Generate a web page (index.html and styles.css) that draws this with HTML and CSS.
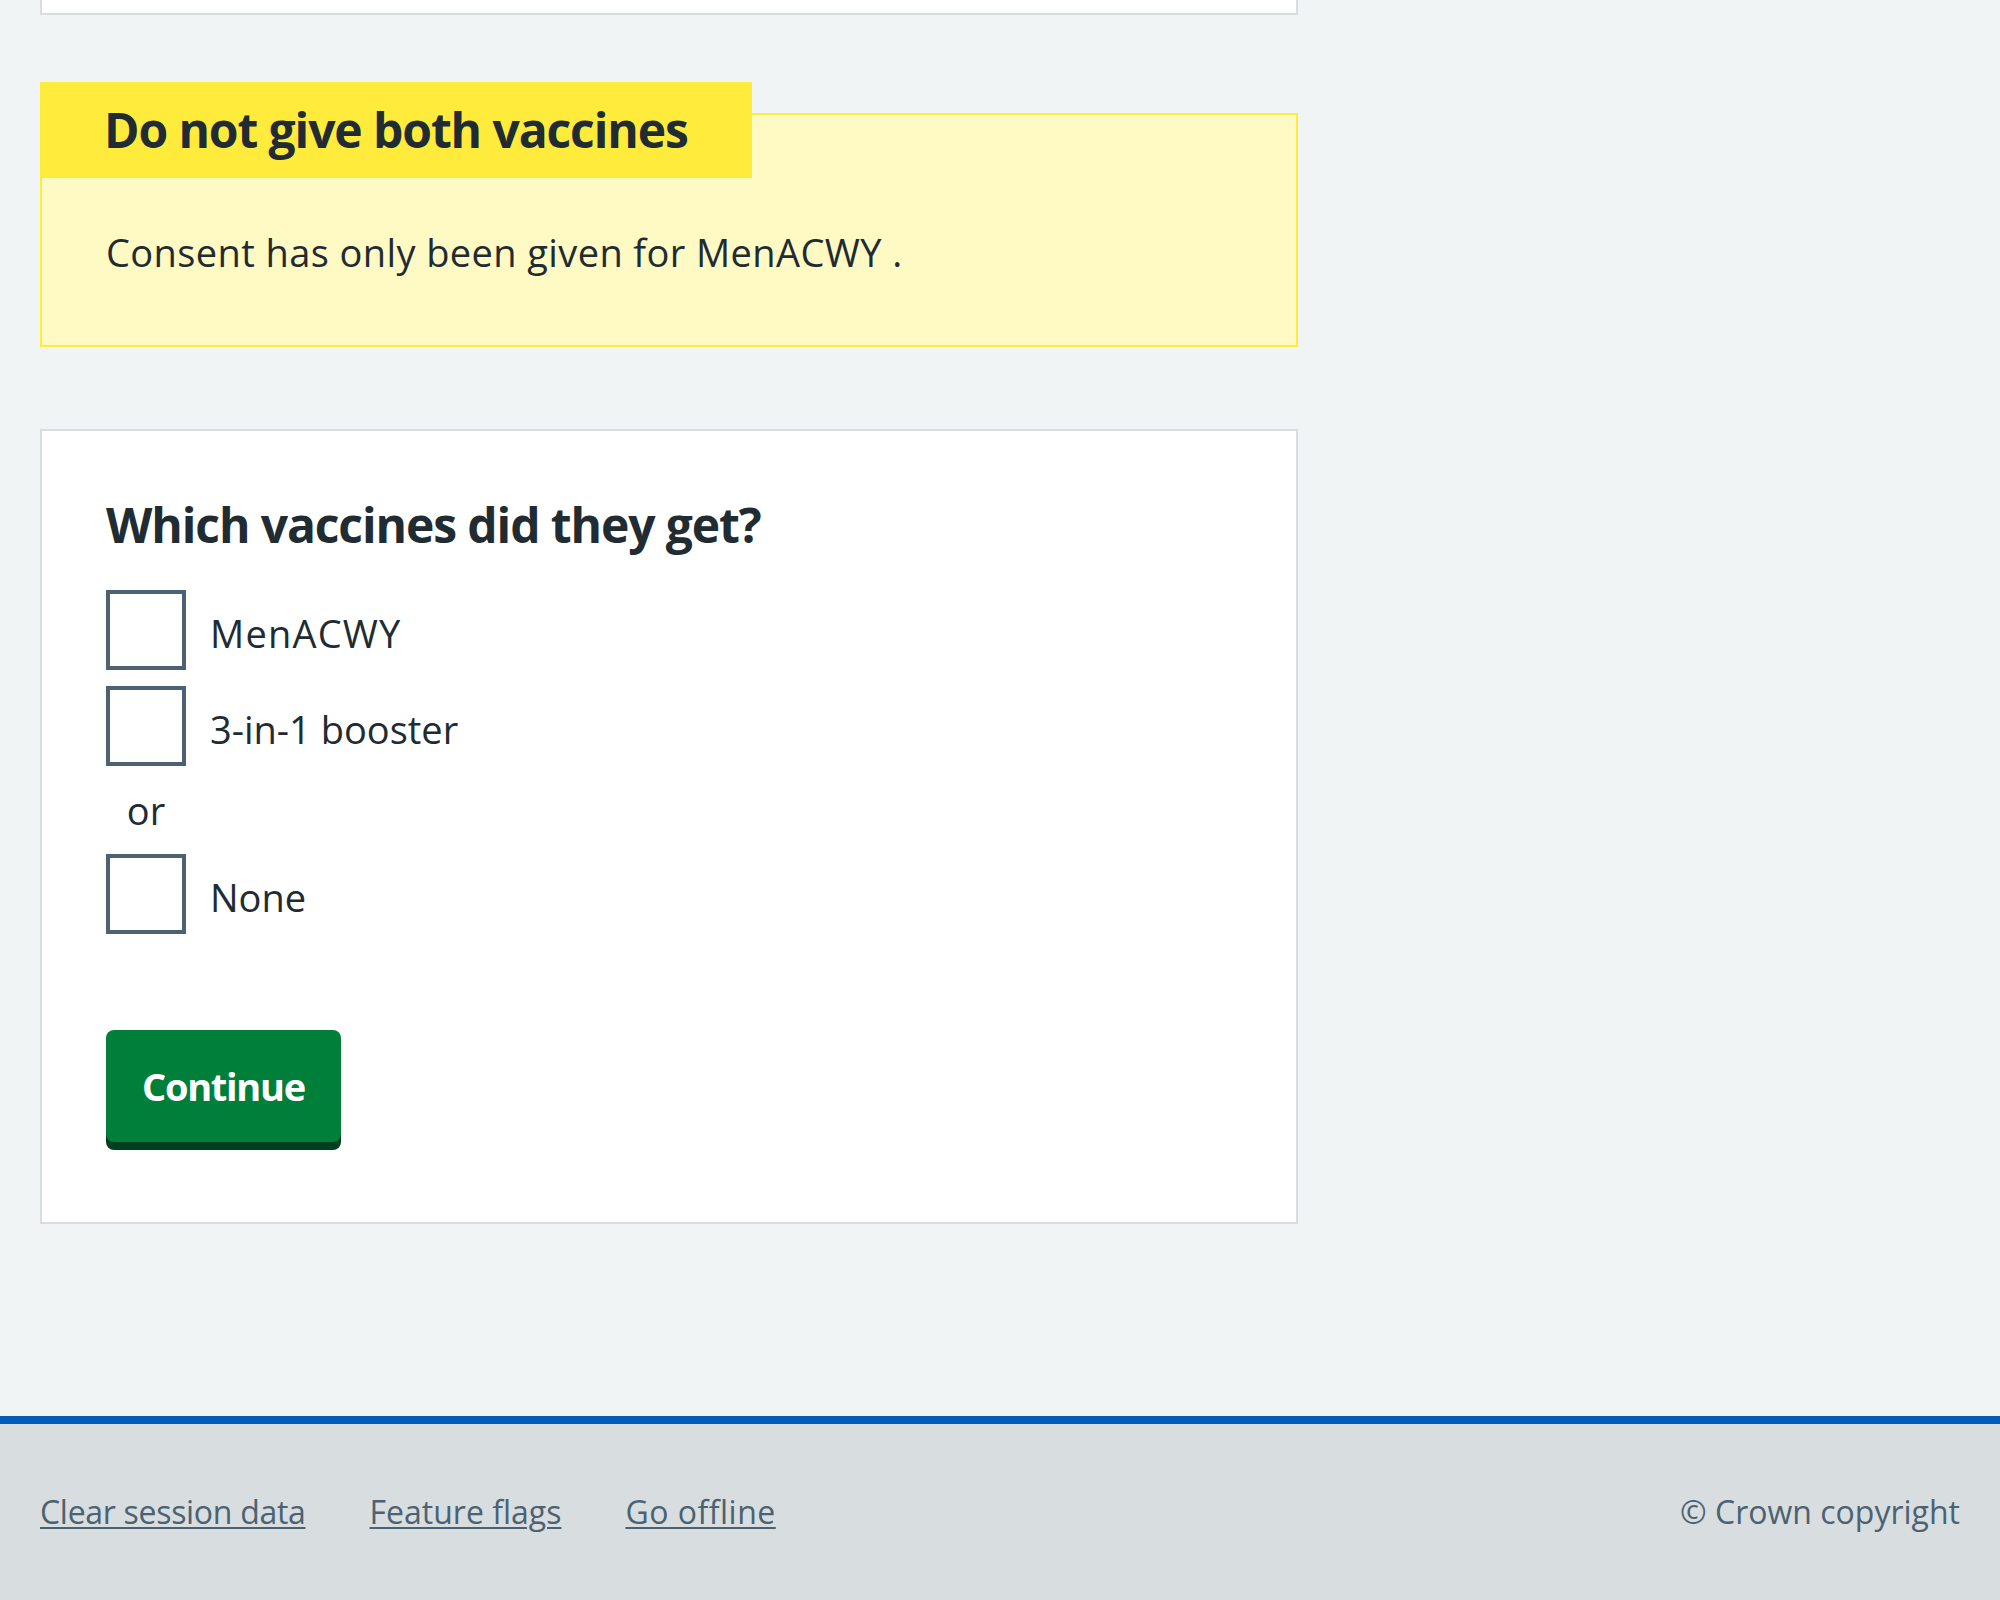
FILE: index.html
```html
<!DOCTYPE html>
<html lang="en">
<head>
<meta charset="utf-8">
<title>Which vaccines did they get?</title>
<link rel="stylesheet" href="styles.css">
</head>
<body>
<main class="main">
  <div class="column">
    <div class="card card--cut"></div>

    <div class="warning-callout">
      <h3 class="warning-callout__label">Do not give both vaccines</h3>
      <p class="warning-callout__text">Consent has only been given for MenACWY .</p>
    </div>

    <div class="card card--form">
      <form class="form" onsubmit="return false">
        <fieldset class="fieldset">
          <legend class="legend">Which vaccines did they get?</legend>
          <div class="checkboxes">
            <div class="checkbox-item">
              <input class="checkbox-input" type="checkbox" id="v1">
              <label class="checkbox-label checkbox-label--caps" for="v1">MenACWY</label>
            </div>
            <div class="checkbox-item">
              <input class="checkbox-input" type="checkbox" id="v2">
              <label class="checkbox-label" for="v2">3-in-1 booster</label>
            </div>
            <div class="checkbox-divider">or</div>
            <div class="checkbox-item">
              <input class="checkbox-input" type="checkbox" id="v3">
              <label class="checkbox-label" for="v3">None</label>
            </div>
          </div>
        </fieldset>
        <button class="button" type="submit">Continue</button>
      </form>
    </div>
  </div>
</main>

<footer class="footer">
  <ul class="footer__links">
    <li><a class="footer__link footer__link--tight" href="#">Clear session data</a></li>
    <li><a class="footer__link" href="#">Feature flags</a></li>
    <li><a class="footer__link footer__link--wide" href="#">Go offline</a></li>
  </ul>
  <p class="footer__copyright">© Crown copyright</p>
</footer>
</body>
</html>
```

FILE: styles.css
```css
* {
  box-sizing: border-box;
}

html, body {
  margin: 0;
  padding: 0;
}

body {
  background: #f0f4f5;
  color: #212b32;
  font-family: "Open Sans", "Noto Sans", "Liberation Sans", sans-serif;
  font-size: 38px;
  line-height: 56px;
  font-variant-ligatures: none;
}

.main {
  padding: 0 40px 192px;
}

.column {
  width: 1258px;
}

.card {
  background: #ffffff;
  border: 2px solid #d8dde0;
}

.card--cut {
  border-top: none;
  height: 15px;
}

/* Warning callout */
.warning-callout {
  margin-top: 98px;
  background: #fff9c4;
  border: 2px solid #ffeb3b;
  padding: 0 64px 65px 64px;
}

.warning-callout__label {
  display: block;
  width: fit-content;
  margin: -33px 0 0 -66px;
  padding: 16px 64px;
  background: #ffeb3b;
  font-size: 48px;
  line-height: 64px;
  font-weight: 700;
  letter-spacing: -1.1px;
  color: #212b32;
}

.warning-callout__text {
  margin: 46px 0 0;
  font-size: 38px;
  line-height: 56px;
  letter-spacing: 0.4px;
}

/* Form card */
.card--form {
  margin-top: 82px;
  padding: 62px 64px 80px;
}

.form {
  margin: 0;
}

.fieldset {
  border: 0;
  margin: 0;
  padding: 0;
  min-width: 0;
}

.legend {
  padding: 0;
  margin: 0 0 33px;
  font-size: 48px;
  line-height: 64px;
  font-weight: 700;
  letter-spacing: -1.1px;
}

.checkboxes {
  display: flex;
  flex-direction: column;
}

.checkbox-item {
  display: flex;
  align-items: flex-start;
  margin-bottom: 16px;
}

.checkbox-input {
  appearance: none;
  -webkit-appearance: none;
  margin: 0;
  width: 80px;
  height: 80px;
  flex: 0 0 80px;
  border: 4px solid #4c6272;
  background: #ffffff;
  border-radius: 0;
}

.checkbox-label {
  padding: 15px 24px 9px;
  font-size: 38px;
  line-height: 56px;
}

.checkbox-label--caps {
  letter-spacing: 1.2px;
}

.checkbox-divider {
  width: 80px;
  text-align: center;
  margin-bottom: 16px;
  font-size: 38px;
  line-height: 56px;
}

/* Button */
.button {
  margin-top: 80px;
  display: inline-block;
  font-family: inherit;
  font-size: 38px;
  line-height: 56px;
  font-weight: 700;
  color: #ffffff;
  background: #007f3b;
  border: 4px solid transparent;
  border-radius: 8px;
  padding: 24px 32px;
  box-shadow: 0 8px 0 #00401e;
  cursor: pointer;
  letter-spacing: -1.3px;
  font-variant-ligatures: none;
}

/* Footer */
.footer {
  background: #d8dde0;
  border-top: 8px solid #005eb8;
  height: 184px;
  padding: 64px 40px 0;
  display: flex;
  justify-content: space-between;
  align-items: flex-start;
  color: #4c6272;
  font-size: 32px;
  line-height: 48px;
}

.footer__links {
  list-style: none;
  margin: 0;
  padding: 0;
  display: flex;
  gap: 64px;
}

.footer__link {
  color: #4c6272;
  text-decoration: underline;
  text-decoration-thickness: 2px;
  text-underline-offset: 3px;
  letter-spacing: 0;
}

.footer__link--tight {
  letter-spacing: -0.3px;
}

.footer__link--wide {
  letter-spacing: 0.5px;
}

.footer__copyright {
  margin: 0;
}
```
